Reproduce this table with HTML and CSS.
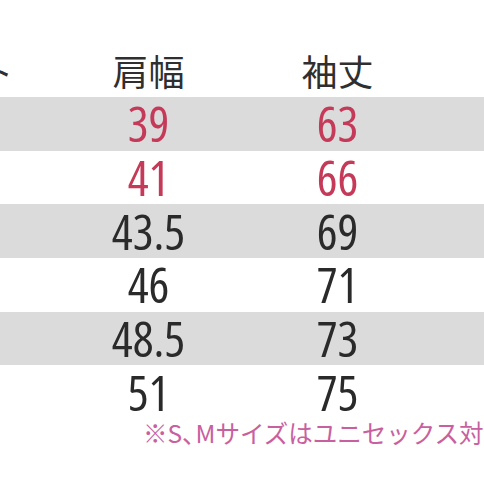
FILE: index.html
```html
<!DOCTYPE html>
<html lang="ja">
<head>
<meta charset="utf-8">
<link rel="stylesheet" href="styles.css">
</head>
<body>
<div class="page">
  <div class="chart">
    <div class="row head">
      <div class="cell">バスト</div>
      <div class="cell">肩幅</div>
      <div class="cell">袖丈</div>
      <div class="cell">着丈</div>
    </div>
    <div class="row gray accent">
      <div class="cell num">88</div>
      <div class="cell num">39</div>
      <div class="cell num">63</div>
      <div class="cell num">68</div>
    </div>
    <div class="row accent">
      <div class="cell num">94</div>
      <div class="cell num">41</div>
      <div class="cell num">66</div>
      <div class="cell num">70</div>
    </div>
    <div class="row gray">
      <div class="cell num">100</div>
      <div class="cell num">43.5</div>
      <div class="cell num">69</div>
      <div class="cell num">72</div>
    </div>
    <div class="row">
      <div class="cell num">106</div>
      <div class="cell num">46</div>
      <div class="cell num">71</div>
      <div class="cell num">74</div>
    </div>
    <div class="row gray">
      <div class="cell num">112</div>
      <div class="cell num">48.5</div>
      <div class="cell num">73</div>
      <div class="cell num">76</div>
    </div>
    <div class="row">
      <div class="cell num">118</div>
      <div class="cell num">51</div>
      <div class="cell num">75</div>
      <div class="cell num">78</div>
    </div>
  </div>
  <p class="note">※S<span class="comma">、</span>Mサイズはユニセックス対応</p>
</div>
</body>
</html>
```
FILE: styles.css
```css
html, body {
  margin: 0;
  padding: 0;
  background: #ffffff;
}
body {
  width: 484px;
  height: 484px;
  overflow: hidden;
  font-family: "Noto Sans CJK JP", "Open Sans", sans-serif;
  color: #2a2a2a;
}
.page {
  width: 484px;
  overflow: hidden;
}
.chart {
  display: flex;
  flex-direction: column;
  margin-left: -135px;
  width: 756px;
}
.row {
  display: grid;
  grid-template-columns: repeat(4, 189px);
  height: 53.7px;
  align-items: center;
}
.row.head {
  height: 97px;
  align-items: end;
}
.row.head .cell {
  font-size: 36px;
  line-height: 36px;
  padding-bottom: 9px;
  font-weight: 400;
  color: #2f2f2f;
}
.row.gray {
  background: #dbdbdb;
}
.cell {
  text-align: center;
  white-space: nowrap;
}
.num {
  font-family: "Open Sans", sans-serif;
  font-size: 49px;
  line-height: 53px;
  font-stretch: 77%;
  font-weight: 390;
  display: inline-block;
}
.row.accent .num {
  color: #c43a58;
}
.note {
  margin: 0;
  padding: 0 0 0 143px;
  font-size: 24.5px;
  line-height: 28px;
  color: #c860a0;
  white-space: nowrap;
}
.comma {
  letter-spacing: -11px;
}
```
